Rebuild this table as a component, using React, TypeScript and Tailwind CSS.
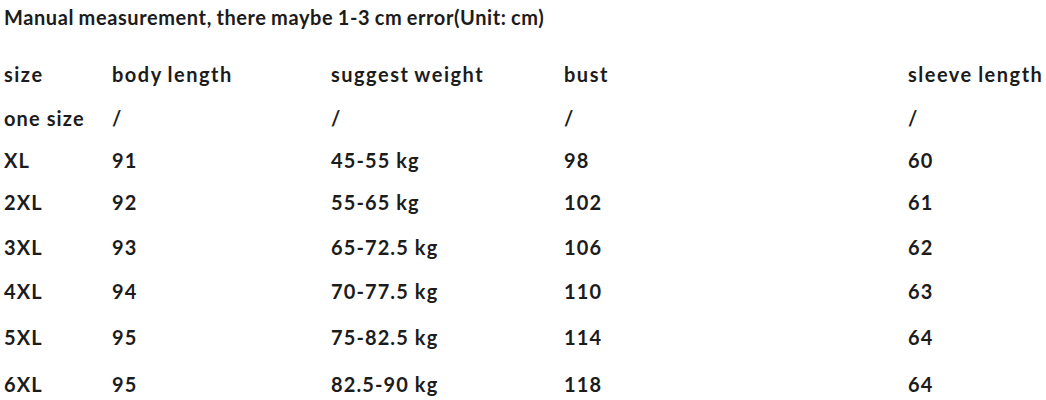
const rows: { h: string; cells: string[] }[] = [
  { h: 'h-[44px]', cells: ['one size', '/', '/', '/', '/'] },
  { h: 'h-[39px]', cells: ['XL', '91', '45-55 kg', '98', '60'] },
  { h: 'h-[46px]', cells: ['2XL', '92', '55-65 kg', '102', '61'] },
  { h: 'h-[44px]', cells: ['3XL', '93', '65-72.5 kg', '106', '62'] },
  { h: 'h-[44px]', cells: ['4XL', '94', '70-77.5 kg', '110', '63'] },
  { h: 'h-[47px]', cells: ['5XL', '95', '75-82.5 kg', '114', '64'] },
  { h: 'h-[48px]', cells: ['6XL', '95', '82.5-90 kg', '118', '64'] },
];

const cols = 'grid grid-cols-[108px_219px_233px_344px_1fr] items-center whitespace-nowrap';

export default function App() {
  return (
    <div
      className="w-[1046px] h-[400px] overflow-hidden bg-white pl-[4px] text-[#1c1c1c] font-bold text-[20px]"
      style={{ fontFamily: 'Lato, "Noto Sans", sans-serif' }}
    >
      <div className="h-[34px] mb-[18px] flex items-center whitespace-nowrap tracking-[0.6px] [word-spacing:-1px]">
        Manual measurement, there maybe 1-3 cm error(Unit: cm)
      </div>
      <div className={`${cols} h-[44px] tracking-[1.5px] [word-spacing:-1px]`}>
        <div>size</div>
        <div>body length</div>
        <div>suggest weight</div>
        <div>bust</div>
        <div>sleeve length</div>
      </div>
      {rows.map((r) => (
        <div key={r.cells[0]} className={`${cols} ${r.h} tracking-[1.1px]`}>
          {r.cells.map((c, i) => (
            <div key={i}>{c}</div>
          ))}
        </div>
      ))}
    </div>
  );
}
